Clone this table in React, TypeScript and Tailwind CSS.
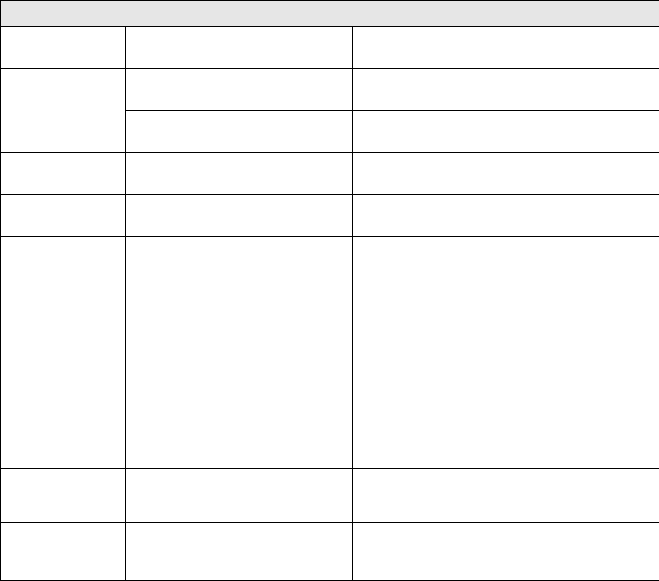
export default function App() {
  const td = "border border-black p-0";
  return (
    <div className="w-[659px] h-[581px] bg-white">
      <table className="w-[659px] table-fixed border-collapse">
        <colgroup>
          <col className="w-[125px]" />
          <col className="w-[227px]" />
          <col className="w-[307px]" />
        </colgroup>
        <tbody>
          <tr className="h-[26px]">
            <td colSpan={3} className={`${td} bg-[#e6e6e6]`}></td>
          </tr>
          <tr className="h-[42px]">
            <td className={td}></td>
            <td className={td}></td>
            <td className={td}></td>
          </tr>
          <tr className="h-[42px]">
            <td rowSpan={2} className={td}></td>
            <td className={td}></td>
            <td className={td}></td>
          </tr>
          <tr className="h-[42px]">
            <td className={td}></td>
            <td className={td}></td>
          </tr>
          <tr className="h-[42px]">
            <td className={td}></td>
            <td className={td}></td>
            <td className={td}></td>
          </tr>
          <tr className="h-[42px]">
            <td className={td}></td>
            <td className={td}></td>
            <td className={td}></td>
          </tr>
          <tr className="h-[232px]">
            <td className={td}></td>
            <td className={td}></td>
            <td className={td}></td>
          </tr>
          <tr className="h-[54px]">
            <td className={td}></td>
            <td className={td}></td>
            <td className={td}></td>
          </tr>
          <tr className="h-[58px]">
            <td className={td}></td>
            <td className={td}></td>
            <td className={td}></td>
          </tr>
        </tbody>
      </table>
    </div>
  );
}
